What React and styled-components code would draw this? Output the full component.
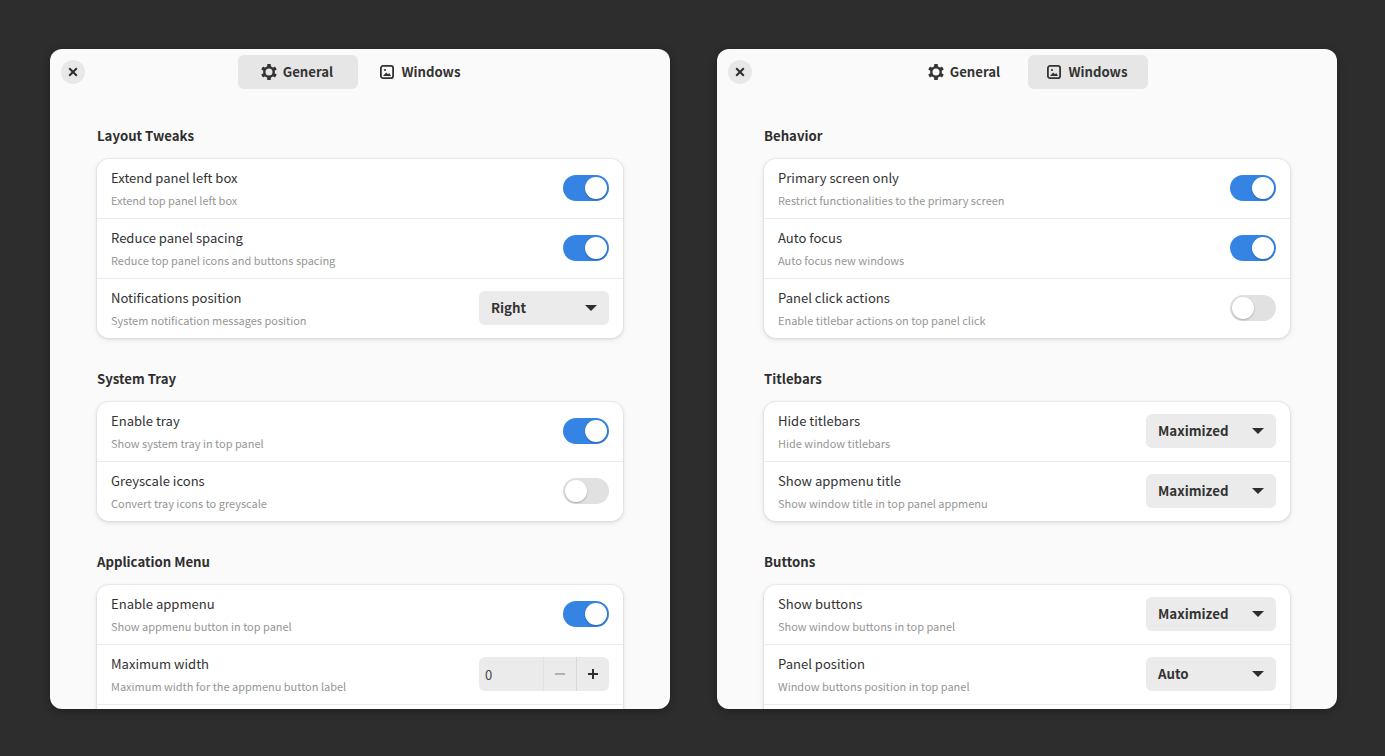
import styled, { createGlobalStyle } from "styled-components";

const GlobalStyle = createGlobalStyle`
  html, body {
    margin: 0;
    padding: 0;
    height: 100%;
    background: #2d2d2d;
    overflow: hidden;
  }
  body {
    font-family: "Noto Sans CJK SC", "Noto Sans", sans-serif;
    color: #2e2e2e;
  }
`

const GearIcon = () => (
  <svg width="16" height="16" viewBox="0 0 16 16" fill="none">
    <circle cx="8" cy="8" r="4.7" stroke="currentColor" strokeWidth="2.4" />
    <g fill="currentColor">
      <rect x="6.2" y="0" width="3.6" height="3" rx="0.6" />
      <rect x="6.2" y="13" width="3.6" height="3" rx="0.6" />
      <rect x="6.2" y="0" width="3.6" height="3" rx="0.6" transform="rotate(60 8 8)" />
      <rect x="6.2" y="0" width="3.6" height="3" rx="0.6" transform="rotate(120 8 8)" />
      <rect x="6.2" y="0" width="3.6" height="3" rx="0.6" transform="rotate(240 8 8)" />
      <rect x="6.2" y="0" width="3.6" height="3" rx="0.6" transform="rotate(300 8 8)" />
    </g>
  </svg>
)

const ImageIcon = () => (
  <svg width="16" height="16" viewBox="0 0 16 16" fill="none">
    <rect x="1.9" y="1.9" width="12.2" height="12.2" rx="2.2" stroke="currentColor" strokeWidth="1.8" />
    <circle cx="6" cy="6" r="1.1" fill="currentColor" />
    <path d="M4 12 L7.2 8.6 L9 10.2 L10.3 9 L12 12 Z" fill="currentColor" />
  </svg>
)

const CloseIcon = () => (
  <svg width="10" height="10" viewBox="0 0 10 10" fill="none">
    <path d="M1.2 1.2 L8.8 8.8 M8.8 1.2 L1.2 8.8" stroke="currentColor" strokeWidth="2" />
  </svg>
)

const generalSections = [
  {
    title: "Layout Tweaks",
    rows: [
      { title: "Extend panel left box", sub: "Extend top panel left box", on: true },
      { title: "Reduce panel spacing", sub: "Reduce top panel icons and buttons spacing", on: true },
      { title: "Notifications position", sub: "System notification messages position", select: "Right" },
    ],
  },
  {
    title: "System Tray",
    rows: [
      { title: "Enable tray", sub: "Show system tray in top panel", on: true },
      { title: "Greyscale icons", sub: "Convert tray icons to greyscale", on: false },
    ],
  },
  {
    title: "Application Menu",
    rows: [
      { title: "Enable appmenu", sub: "Show appmenu button in top panel", on: true },
      { title: "Maximum width", sub: "Maximum width for the appmenu button label", spin: "0" },
      {},
    ],
  },
]

const windowsSections = [
  {
    title: "Behavior",
    rows: [
      { title: "Primary screen only", sub: "Restrict functionalities to the primary screen", on: true },
      { title: "Auto focus", sub: "Auto focus new windows", on: true },
      { title: "Panel click actions", sub: "Enable titlebar actions on top panel click", on: false },
    ],
  },
  {
    title: "Titlebars",
    rows: [
      { title: "Hide titlebars", sub: "Hide window titlebars", select: "Maximized" },
      { title: "Show appmenu title", sub: "Show window title in top panel appmenu", select: "Maximized" },
    ],
  },
  {
    title: "Buttons",
    rows: [
      { title: "Show buttons", sub: "Show window buttons in top panel", select: "Maximized" },
      { title: "Panel position", sub: "Window buttons position in top panel", select: "Auto" },
      {},
    ],
  },
]

const Row = ({ row }) => (
  <RowStl>
    <RowTextStl>
      <RowTitleStl>{row.title}</RowTitleStl>
      <RowSubStl>{row.sub}</RowSubStl>
    </RowTextStl>
    {row.select && (
      <SelectStl>
        {row.select}
        <ArrowStl />
      </SelectStl>
    )}
    {row.spin && (
      <SpinStl>
        <SpinValueStl>{row.spin}</SpinValueStl>
        <SpinButtonStl $disabled>
          <svg width="10" height="10" viewBox="0 0 10 10"><rect x="0" y="4" width="10" height="2" fill="currentColor" /></svg>
        </SpinButtonStl>
        <SpinButtonStl>
          <svg width="10" height="10" viewBox="0 0 10 10"><path d="M0 4h4V0h2v4h4v2H6v4H4V6H0z" fill="currentColor" /></svg>
        </SpinButtonStl>
      </SpinStl>
    )}
    {row.on !== undefined && (
      <SwitchStl $on={row.on}>
        <KnobStl />
      </SwitchStl>
    )}
  </RowStl>
)

const PrefsWindow = ({ active, sections }) => (
  <WindowStl>
    <HeaderStl>
      <CloseStl><CloseIcon /></CloseStl>
      <TabStl $active={active === "general"}><GearIcon />General</TabStl>
      <TabStl $active={active === "windows"}><ImageIcon />Windows</TabStl>
    </HeaderStl>
    <ContentStl>
      {sections.map((section) => (
        <section key={section.title}>
          <SectionTitleStl>{section.title}</SectionTitleStl>
          <CardStl>
            {section.rows.map((row, i) => <Row key={i} row={row} />)}
          </CardStl>
        </section>
      ))}
    </ContentStl>
  </WindowStl>
)

export default function App() {
  return (
    <PageStl>
      <GlobalStyle />
      <PrefsWindow active="general" sections={generalSections} />
      <PrefsWindow active="windows" sections={windowsSections} />
    </PageStl>
  )
}

const PageStl = styled.div`
  display: flex;
  gap: 47px;
  padding: 49px 48px 47px 50px;
  height: 756px;
  box-sizing: border-box;
`

const WindowStl = styled.div`
  width: 620px;
  height: 660px;
  background: #fafafa;
  border-radius: 12px;
  overflow: hidden;
  box-shadow: 0 2px 8px rgba(0, 0, 0, 0.3);
`

const HeaderStl = styled.div`
  position: relative;
  display: flex;
  justify-content: center;
  gap: 3px;
  padding: 6px 1px 0 0;
  height: 40px;
`

const CloseStl = styled.div`
  position: absolute;
  left: 11px;
  top: 11px;
  width: 24px;
  height: 24px;
  border-radius: 50%;
  background: #e8e8e8;
  display: flex;
  align-items: center;
  justify-content: center;
`

const TabStl = styled.div`
  width: 120px;
  height: 34px;
  box-sizing: border-box;
  padding-right: 2px;
  border-radius: 6px;
  background: ${(p) => (p.$active ? "#e6e6e6" : "transparent")};
  display: flex;
  align-items: center;
  justify-content: center;
  gap: 6px;
  font-size: 13.2px;
  line-height: 18px;
  font-weight: 700;
  color: #333;
`

const ContentStl = styled.div`
  padding: 30px 47px 0;
  display: flex;
  flex-direction: column;
  gap: 30px;
`

const SectionTitleStl = styled.div`
  font-size: 13.2px;
  font-weight: 700;
  line-height: 22px;
  margin-bottom: 12px;
`

const CardStl = styled.div`
  background: #fff;
  border-radius: 12px;
  box-shadow: 0 0 0 1px rgba(0, 0, 0, 0.03), 0 1px 3px 1px rgba(0, 0, 0, 0.07), 0 2px 6px 2px rgba(0, 0, 0, 0.03);
`

const RowStl = styled.div`
  display: flex;
  align-items: center;
  justify-content: space-between;
  height: 58px;
  padding: 0 14px 1px;
  & + & {
    border-top: 1px solid #ebebeb;
  }
`

const RowTextStl = styled.div`
  display: flex;
  flex-direction: column;
`

const RowTitleStl = styled.div`
  font-size: 13.05px;
  line-height: 22px;
  color: #333;
`

const RowSubStl = styled.div`
  font-size: 10.97px;
  line-height: 18px;
  margin-top: 2px;
  color: #969696;
`

const SwitchStl = styled.div`
  width: 46px;
  height: 26px;
  border-radius: 13px;
  background: ${(p) => (p.$on ? "#3584e4" : "#e1e1e1")};
  display: flex;
  align-items: center;
  padding: 0 2px;
  box-sizing: border-box;
  justify-content: ${(p) => (p.$on ? "flex-end" : "flex-start")};
`

const KnobStl = styled.div`
  width: 22px;
  height: 22px;
  border-radius: 50%;
  background: #fff;
  box-shadow: 0 1px 2px rgba(0, 0, 0, 0.25);
`

const SelectStl = styled.div`
  width: 130px;
  height: 34px;
  box-sizing: border-box;
  padding: 0 12px 2px;
  border-radius: 6px;
  background: #ebebeb;
  display: flex;
  align-items: center;
  justify-content: space-between;
  font-size: 13.3px;
  font-weight: 700;
  color: #333;
`

const ArrowStl = styled.div`
  width: 0;
  height: 0;
  margin-top: 2px;
  border-left: 6px solid transparent;
  border-right: 6px solid transparent;
  border-top: 6px solid #2e2e2e;
`

const SpinStl = styled.div`
  width: 130px;
  height: 34px;
  border-radius: 6px;
  background: #ebebeb;
  display: flex;
  align-items: center;
  overflow: hidden;
`

const SpinValueStl = styled.div`
  flex: 1;
  padding-left: 6px;
  font-size: 13px;
  color: #444;
`

const SpinButtonStl = styled.div`
  width: 32px;
  height: 34px;
  border-left: 1px solid ${(p) => (p.$disabled ? "#e2e2e2" : "#d8d8d8")};
  display: flex;
  align-items: center;
  justify-content: center;
  color: ${(p) => (p.$disabled ? "#b0b0b0" : "#2e2e2e")};
`
